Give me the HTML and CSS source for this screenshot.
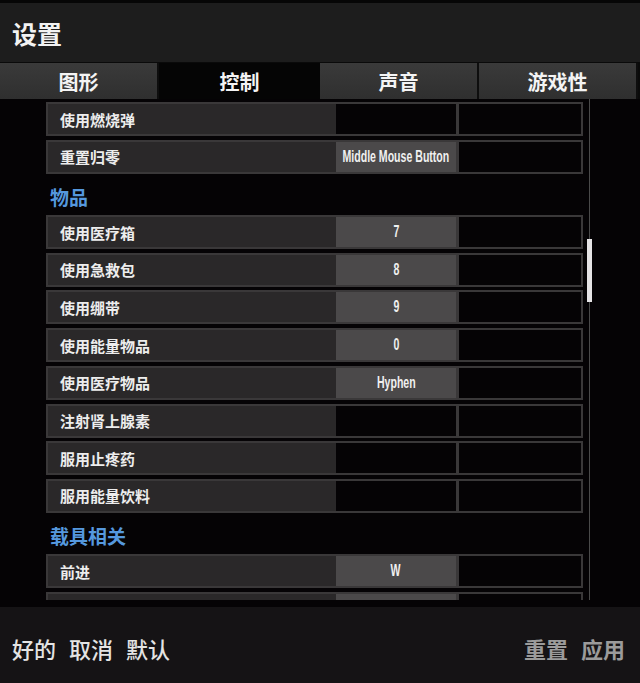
FILE: index.html
```html
<!DOCTYPE html>
<html lang="zh-CN">
<head>
<meta charset="utf-8">
<title>设置</title>
<link rel="stylesheet" href="styles.css">
</head>
<body>
<div class="app">
  <header class="top">
    <h1 class="title">设置</h1>
  </header>

  <nav class="tabs">
    <div class="tab">图形</div>
    <div class="tab active">控制</div>
    <div class="tab">声音</div>
    <div class="tab">游戏性</div>
  </nav>

  <main class="panel">
    <div class="viewport">
      <div class="list">
        <div class="row"><div class="label">使用燃烧弹</div><div class="key empty"></div><div class="key empty"></div></div>
        <div class="row"><div class="label">重置归零</div><div class="key"><span class="kt">Middle Mouse Button</span></div><div class="key empty"></div></div>

        <div class="section">物品</div>
        <div class="row"><div class="label">使用医疗箱</div><div class="key"><span class="kt">7</span></div><div class="key empty"></div></div>
        <div class="row"><div class="label">使用急救包</div><div class="key"><span class="kt">8</span></div><div class="key empty"></div></div>
        <div class="row"><div class="label">使用绷带</div><div class="key"><span class="kt">9</span></div><div class="key empty"></div></div>
        <div class="row"><div class="label">使用能量物品</div><div class="key"><span class="kt">0</span></div><div class="key empty"></div></div>
        <div class="row"><div class="label">使用医疗物品</div><div class="key"><span class="kt">Hyphen</span></div><div class="key empty"></div></div>
        <div class="row"><div class="label">注射肾上腺素</div><div class="key empty"></div><div class="key empty"></div></div>
        <div class="row"><div class="label">服用止疼药</div><div class="key empty"></div><div class="key empty"></div></div>
        <div class="row"><div class="label">服用能量饮料</div><div class="key empty"></div><div class="key empty"></div></div>

        <div class="section">载具相关</div>
        <div class="row"><div class="label">前进</div><div class="key"><span class="kt">W</span></div><div class="key empty"></div></div>
        <div class="row"><div class="label"></div><div class="key"></div><div class="key empty"></div></div>
      </div>
    </div>
    <div class="scroll"><div class="thumb"></div></div>
  </main>

  <footer class="bottom">
    <div class="actions">
      <span class="btn">好的</span>
      <span class="btn">取消</span>
      <span class="btn">默认</span>
    </div>
    <div class="actions dim">
      <span class="btn">重置</span>
      <span class="btn">应用</span>
    </div>
  </footer>
</div>
</body>
</html>
```

FILE: styles.css
```css
* {
  box-sizing: border-box;
}

html, body {
  margin: 0;
  padding: 0;
  background: #000;
}

body {
  font-family: "Noto Sans CJK SC", "Noto Sans", sans-serif;
  color: #ececec;
}

.app {
  width: 640px;
  height: 683px;
  display: flex;
  flex-direction: column;
  overflow: hidden;
}

/* title bar */
.top {
  height: 62px;
  border-top: 3px solid #060606;
  background: #1d1d1d;
  display: flex;
  align-items: center;
  padding-left: 12px;
}

.title {
  margin: 0;
  font-size: 25px;
  font-weight: 700;
  color: #f2f2f2;
  line-height: 1;
  padding-top: 2px;
}

/* category tabs */
.tabs {
  height: 37px;
  display: grid;
  grid-template-columns: 159px 161px 159px 159px;
  background: #0a0a0a;
  padding-top: 1px;
}

.tab {
  display: flex;
  align-items: center;
  justify-content: center;
  font-size: 20px;
  font-weight: 700;
  color: #f4f4f4;
  background: linear-gradient(#3a3a3a, #2f2f2f);
  border-right: 2px solid #0e0e0e;
}

.tab.active {
  background: #050505;
  border-right: none;
}

/* scrolling list of bindings */
.panel {
  height: 508px;
  background: #050305;
  display: flex;
  padding-left: 46px;
}

.viewport {
  width: 537px;
  height: 501px;
  overflow: hidden;
}

.list {
  padding-top: 3px;
}

.row {
  height: 34px;
  margin-bottom: 3.7px;
  display: grid;
  grid-template-columns: 1fr 120px 122px;
  column-gap: 3px;
  padding: 2px;
  background: #3a3839;
}

.label {
  background: #2a2829;
  margin-right: -3px;
  display: flex;
  align-items: center;
  padding-left: 12px;
  font-size: 15px;
  font-weight: 700;
  color: #ededed;
}

.key {
  background: #4b494a;
  display: flex;
  align-items: center;
  justify-content: center;
  overflow: hidden;
}

.key.empty {
  background: #050305;
}

.kt {
  display: inline-block;
  font-family: "Liberation Sans", "DejaVu Sans", sans-serif;
  font-weight: 700;
  font-size: 16px;
  color: #f0f0f0;
  white-space: nowrap;
  transform: scaleX(0.66);
}

.section {
  height: 34px;
  margin-bottom: 3.7px;
  display: flex;
  align-items: center;
  padding-left: 4px;
  padding-top: 4px;
  font-size: 19px;
  font-weight: 700;
  color: #5598de;
}

.scroll {
  width: 5px;
  height: 501px;
  margin-left: 4px;
  background: linear-gradient(to right, transparent 2px, #4a4a4a 2px, #4a4a4a 3px, transparent 3px);
}

.thumb {
  margin-top: 140px;
  height: 63px;
  background: #e6e4e6;
}

/* footer actions */
.bottom {
  flex: 1;
  background: #151315;
  display: flex;
  align-items: center;
  justify-content: space-between;
  padding: 6px 15px 0 12px;
}

.actions {
  display: flex;
  gap: 13px;
}

.btn {
  font-size: 22px;
  font-weight: 500;
  color: #e4e4e4;
  line-height: 1;
}

.dim .btn {
  color: #9b9b9b;
  font-weight: 700;
}
```
